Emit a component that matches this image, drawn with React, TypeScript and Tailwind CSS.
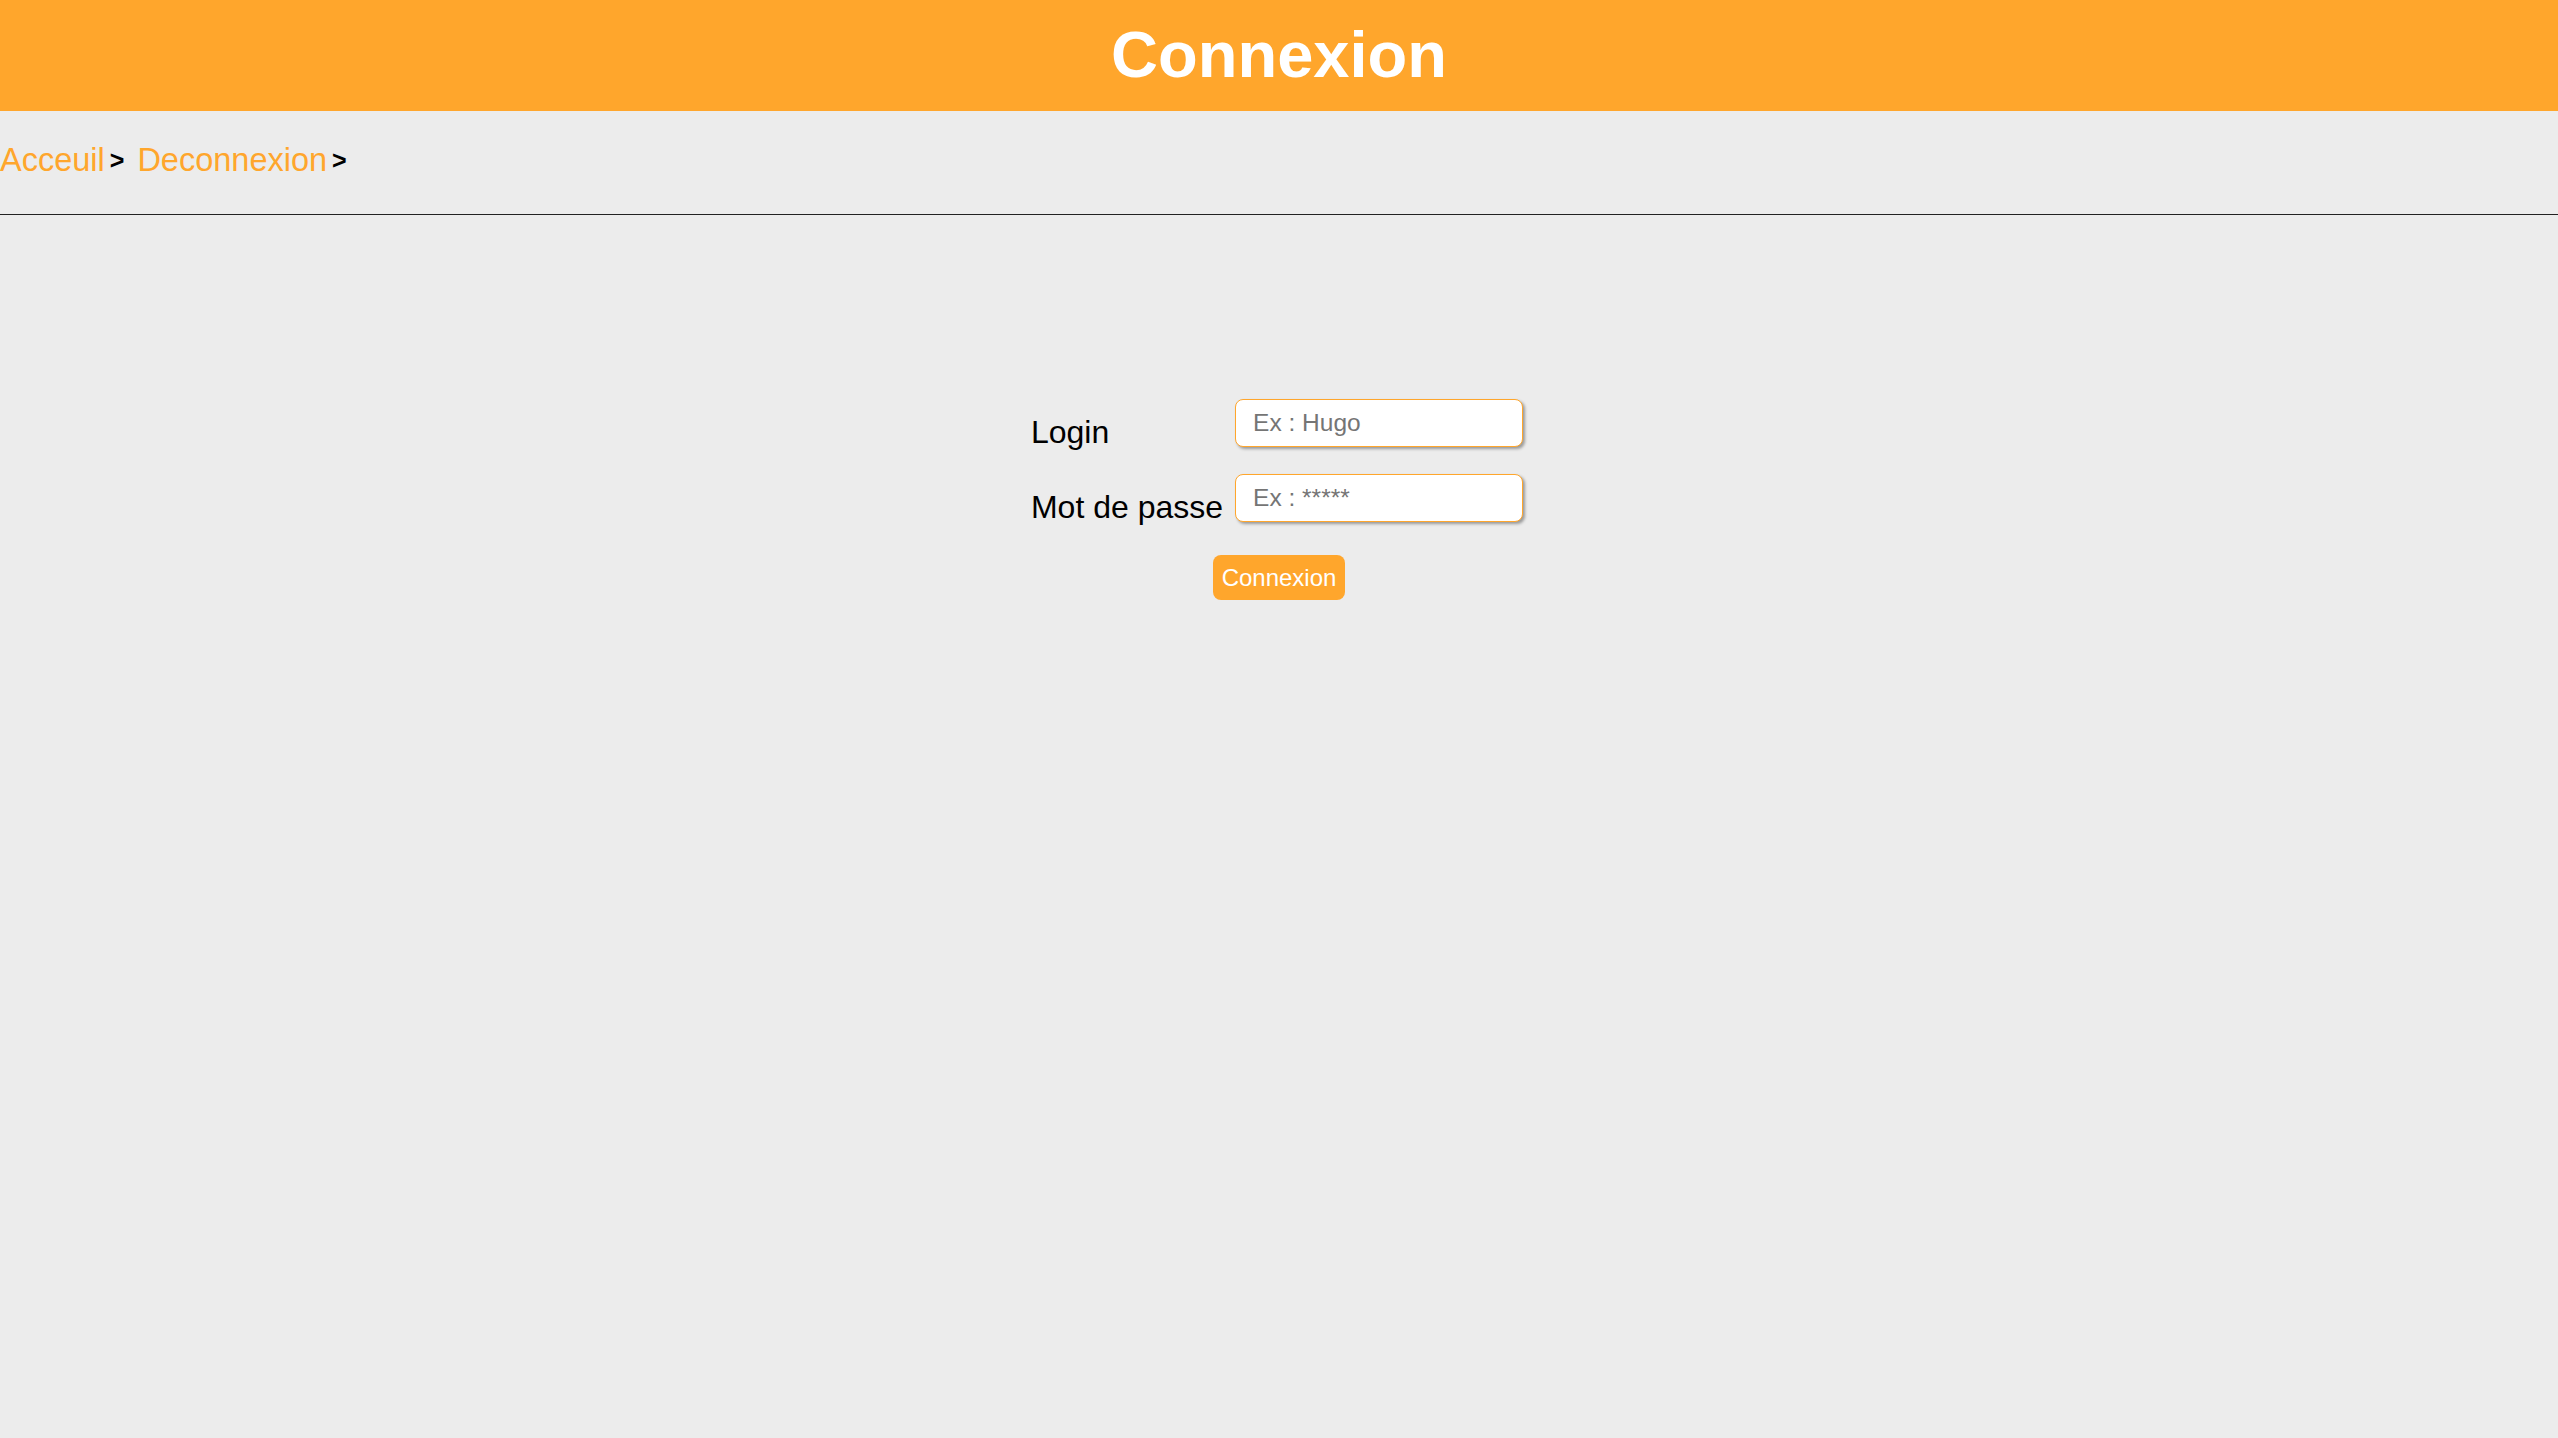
import React from "react";

export default function App() {
  return (
    <div className="min-h-screen bg-[#ececec] font-['Liberation_Sans',Arial,sans-serif]">
      <header className="h-[111px] bg-[#ffa62c] pt-[17px] text-center">
        <h1 className="text-[65px] font-bold leading-[76px] text-white">Connexion</h1>
      </header>

      <nav className="flex h-[104px] items-start border-b border-[#222] pt-[31px]">
        <a href="#" className="text-[32.5px] leading-[37px] text-[#ffa62c]">
          Acceuil
        </a>
        <span className="ml-[5px] text-[25px] font-bold leading-[37px] text-black">&gt;</span>
        <a href="#" className="ml-[13px] text-[32.5px] leading-[37px] text-[#ffa62c]">
          Deconnexion
        </a>
        <span className="ml-[5px] text-[25px] font-bold leading-[37px] text-black">&gt;</span>
      </nav>

      <form className="mt-[184px] flex flex-col items-center" onSubmit={(e) => e.preventDefault()}>
        <div className="grid grid-cols-[auto_288px] items-start gap-x-[12px] gap-y-[23px] pr-[4px]">
          <label htmlFor="login" className="pt-[15px] text-[32px] leading-[37px] text-black">
            Login
          </label>
          <input
            id="login"
            type="text"
            placeholder="Ex : Hugo"
            className="h-[48px] w-[288px] rounded-[8px] border border-[#ffa62c] bg-white pl-[17px] text-[24.5px] text-black shadow-[2px_2px_3px_rgba(0,0,0,0.35)] outline-none placeholder:text-[#757575]"
          />
          <label htmlFor="mdp" className="pt-[15px] text-[32px] leading-[37px] text-black">
            Mot de passe
          </label>
          <input
            id="mdp"
            type="password"
            placeholder="Ex : *****"
            className="h-[48px] w-[288px] rounded-[8px] border border-[#ffa62c] bg-white pl-[17px] text-[24.5px] text-black shadow-[2px_2px_3px_rgba(0,0,0,0.35)] outline-none placeholder:text-[#757575]"
          />
        </div>
        <button
          type="submit"
          className="mt-[29px] h-[45px] w-[132px] rounded-[8px] bg-[#ffa62c] text-[24px] leading-[26px] text-white"
        >
          Connexion
        </button>
      </form>
    </div>
  );
}
